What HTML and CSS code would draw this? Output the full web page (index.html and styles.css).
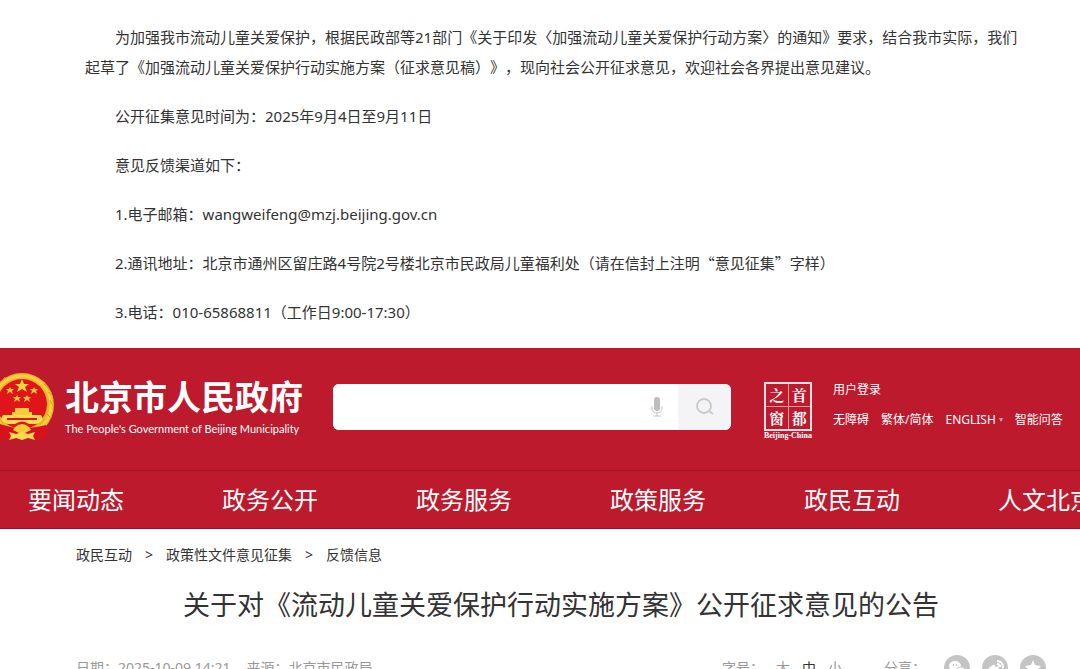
FILE: index.html
```
<!DOCTYPE html>
<html lang="zh-CN">
<head>
    <meta charset="UTF-8">
    <meta name="viewport" content="width=device-width, initial-scale=1.0">
    <title>北京市人民政府 - 反馈信息</title>
    <link rel="stylesheet" href="styles.css">
</head>
<body>
    <!-- 公告正文 -->
    <section class="notice">
        <p>为加强我市流动儿童关爱保护，根据民政部等21部门《关于印发〈加强流动儿童关爱保护行动方案〉的通知》要求，结合我市实际，我们起草了《加强流动儿童关爱保护行动实施方案（征求意见稿）》，现向社会公开征求意见，欢迎社会各界提出意见建议。</p>
        <p>公开征集意见时间为：2025年9月4日至9月11日</p>
        <p>意见反馈渠道如下：</p>
        <p>1.电子邮箱：wangweifeng@mzj.beijing.gov.cn</p>
        <p>2.通讯地址：北京市通州区留庄路4号院2号楼北京市民政局儿童福利处（请在信封上注明<span class="quote">“意见征集”</span>字样）</p>
        <p>3.电话：010-65868811（工作日9:00-17:30）</p>
    </section>

    <!-- 页头 -->
    <header class="header">
        <div class="top">
            <a class="logo" href="#">
                <svg class="emblem" viewBox="0 0 56 72" aria-hidden="true">
                    <circle cx="22" cy="33" r="32" fill="#e9b52c"/>
                    <circle cx="22" cy="33" r="29" fill="none" stroke="#f5cf3e" stroke-width="3"/>
                    <path d="M44 12l5 5M48 20l5 4M50 28l3 6M47 42l4 4M2 9l3-4" stroke="#d99a22"/>
                    <circle cx="22" cy="32" r="25" fill="#e0151b"/>
                    <path d="M0 52Q22 60 46 53L48 60Q46 68 34 68L22 66 10 68Q2 68 0 65z" fill="#d8121b"/>
                    <path d="M22 7l2 5h5l-4 3 2 5-5-3-5 3 2-5-4-3h5z" fill="#fbd93c"/>
                    <path d="M10 15l1 2h3l-2 2 1 3-3-2-3 2 1-3-2-2h3zM34 15l1 2h3l-2 2 1 3-3-2-3 2 1-3-2-2h3zM17 23l1 2h3l-2 2 1 3-3-2-3 2 1-3-2-2h3zM27 23l1 2h3l-2 2 1 3-3-2-3 2 1-3-2-2h3z" fill="#f6c933"/>
                    <path d="M15 36h14v4h3v5H12v-5h3z" fill="#f4cb3b"/>
                    <path d="M3 43h38l2 4q-3 5-8 5h-6q-7-5-14 0H9q-5 0-8-5z" fill="#f9da51"/>
                    <path d="M7 46h30v2H7z" fill="#e0151b"/>
                    <path d="M15 55q7-6 14 0l2 3-6 3h-6l-6-3z" fill="#f4cb3b"/>
                    <path d="M9 60l7 2 6-2 6 2 7-2-2 4 2 4-7-2-6 2-6-2-7 2 2-4z" fill="#f9da51"/>
                </svg>
                <span class="logo-text">
                    <strong>北京市人民政府</strong>
                    <span>The People's Government of Beijing Municipality</span>
                </span>
            </a>

            <form class="search">
                <input type="text" aria-label="搜索">
                <button type="button" class="voice" aria-label="语音">
                    <svg viewBox="0 0 12 20" width="12" height="20">
                        <rect x="3" y="0" width="6" height="14" rx="3" fill="#bdbdbd"/>
                        <path d="M1 9v3a5 4 0 0 0 10 0V9M6 16v3M2 19h8" fill="none" stroke="#c4c4c4"/>
                    </svg>
                </button>
                <button type="submit" class="submit" aria-label="搜索">
                    <svg viewBox="0 0 18 18" width="18" height="18">
                        <circle cx="8" cy="8" r="7" fill="none" stroke="#c9c9c9" stroke-width="1.8"/>
                        <path d="M13 13l4 3" stroke="#c9c9c9" stroke-width="1.8"/>
                    </svg>
                </button>
            </form>

            <a class="capital" href="#">
                <span class="seal">
                    <span>之</span><span>首</span><span>窗</span><span>都</span>
                </span>
                <span class="seal-name">Beijing-China</span>
            </a>

            <div class="links">
                <div><a href="#">用户登录</a></div>
                <div class="links-row">
                    <a href="#">无障碍</a>
                    <a href="#">繁体/简体</a>
                    <a href="#" class="english">ENGLISH<i></i></a>
                    <a href="#">智能问答</a>
                </div>
            </div>
        </div>
        <nav class="nav">
            <a href="#">要闻动态</a>
            <a href="#">政务公开</a>
            <a href="#">政务服务</a>
            <a href="#">政策服务</a>
            <a href="#">政民互动</a>
            <a href="#">人文北京</a>
        </nav>
    </header>

    <!-- 反馈信息 -->
    <main class="main">
        <div class="crumbs">
            <a href="#">政民互动</a>
            <span>&gt;</span>
            <a href="#">政策性文件意见征集</a>
            <span>&gt;</span>
            <a href="#">反馈信息</a>
        </div>
        <h1>关于对《流动儿童关爱保护行动实施方案》公开征求意见的公告</h1>
        <div class="meta">
            <span>日期：2025-10-09 14:21</span>
            <span>来源：北京市民政局</span>
            <div class="size">
                <span>字号：</span>
                <button type="button">大</button>
                <button type="button" class="on">中</button>
                <button type="button">小</button>
            </div>
            <div class="share">
                <span>分享：</span>
                <a href="#" aria-label="微信">
                    <svg viewBox="0 0 26 26"><circle cx="13" cy="13" r="13" fill="#c4c4c4"/><ellipse cx="11" cy="11" rx="6" ry="5" fill="#fff"/><ellipse cx="17" cy="16" rx="5" ry="4" fill="#fff" stroke="#c4c4c4"/><path d="M9 10h1M12 10h1" stroke="#c4c4c4" stroke-width="2"/></svg>
                </a>
                <a href="#" aria-label="微博">
                    <svg viewBox="0 0 26 26"><circle cx="13" cy="13" r="13" fill="#c4c4c4"/><path d="M6 16q0-4 5-6 3-1 2 2 5-2 4 2 3 1 1 3-5 5-11 1-1-1-1-2z" fill="#fff"/><path d="M15 6q6 0 6 7M15 9q3 0 3 3" fill="none" stroke="#fff" stroke-width="2"/></svg>
                </a>
                <a href="#" aria-label="收藏">
                    <svg viewBox="0 0 26 26"><circle cx="13" cy="13" r="13" fill="#c4c4c4"/><path d="M13 5l2 5 6 1-4 4 1 6-5-3-5 3 1-6-4-4 6-1z" fill="#fff"/></svg>
                </a>
            </div>
        </div>
    </main>
</body>
</html>
```
FILE: styles.css
```
* {
    box-sizing: border-box;
}

body {
    margin: 0;
    height: 100vh;
    overflow: hidden;
    background-color: white;
    color: #333333;
    font-family: "Noto Sans", "Noto Sans CJK SC", sans-serif;
    font-size: 15px;
    text-spacing-trim: space-all;
}

a {
    color: inherit;
    text-decoration: none;
}

button {
    padding: 0;
    border: none;
    background: none;
    color: inherit;
    font: inherit;
    cursor: pointer;
}

svg {
    display: block;
}

.notice {
    padding: 22px 50px 21px 85px;
}

.notice p {
    margin: 0 0 19px;
    line-height: 30px;
    text-indent: 2em;
}

.notice p:last-child {
    margin-bottom: 0;
}

.quote {
    font-family: "Noto Sans CJK SC", sans-serif;
}

/* 页头 */
.header {
    background-color: #bd1a2d;
    color: white;
}

.top {
    display: flex;
    align-items: flex-start;
    height: 122px;
    padding-top: 24px;
}

.logo {
    display: flex;
    gap: 9px;
    flex: none;
    width: 333px;
}

.emblem {
    width: 56px;
    height: 72px;
}

.logo-text strong {
    display: block;
    padding-top: 4px;
    font-size: 34px;
    line-height: 42px;
}

.logo-text span {
    display: block;
    font-family: Lato, sans-serif;
    font-size: 11px;
    line-height: 22px;
    white-space: nowrap;
}

.search {
    display: flex;
    flex: 1;
    max-width: 398px;
    height: 46px;
    margin-top: 12px;
    border-radius: 6px;
    overflow: hidden;
    background-color: white;
}

.search input {
    flex: 1;
    min-width: 0;
    padding: 0 12px;
    border: none;
    outline: none;
    font-size: 15px;
}

.search button {
    display: flex;
    align-items: center;
    justify-content: center;
}

.search .voice {
    width: 42px;
}

.search .submit {
    width: 53px;
    background-color: #f4f4f6;
}

.capital {
    flex: none;
    width: 54px;
    margin: 10px 18px 0 30px;
    text-align: center;
}

.seal {
    display: grid;
    grid-template-columns: 1fr 1fr;
    gap: 1px;
    width: 48px;
    margin: 0 auto;
    border: 2px solid #fbe3e3;
    background-color: #e59aa0;
}

.seal span {
    background-color: #bd1a2d;
    font-family: "Noto Serif CJK SC", "Noto Sans CJK SC", serif;
    font-size: 15px;
    font-weight: bold;
    line-height: 22px;
}

.seal-name {
    display: block;
    font-family: "Liberation Serif", serif;
    font-size: 8px;
    font-weight: bold;
    line-height: 10px;
}

.links {
    padding-top: 9px;
    font-size: 12px;
    line-height: 18px;
    white-space: nowrap;
}

.links-row {
    display: flex;
    gap: 12px;
    margin-top: 12px;
}

.english {
    display: flex;
    align-items: center;
    gap: 3px;
}

.english i {
    border: 2px solid transparent;
    border-top: 4px solid #f0a0a0;
    border-bottom: none;
}

.nav {
    display: flex;
    height: 59px;
    padding-left: 28px;
    overflow: hidden;
    border-top: 1px solid #9c1424;
    border-bottom: 1px solid #9c1424;
}

.nav a {
    flex: none;
    width: 194px;
    font-size: 24px;
    line-height: 57px;
}

/* 标题 */
.main {
    padding: 16px 34px 0 76px;
}

.crumbs {
    display: flex;
    gap: 13px;
    font-size: 14px;
    line-height: 20px;
}

h1 {
    margin: 20px 0 0;
    font-size: 27px;
    font-weight: normal;
    line-height: 40px;
    text-align: center;
}

.meta {
    display: flex;
    align-items: center;
    gap: 16px;
    margin-top: 30px;
    color: #999999;
    font-size: 14px;
    line-height: 26px;
}

.size {
    display: flex;
    gap: 12px;
    margin-left: auto;
}

.size .on {
    color: #333333;
}

.share {
    display: flex;
    gap: 12px;
    margin-left: 26px;
}

.share span {
    margin-right: 6px;
}

.share svg {
    width: 26px;
    height: 26px;
}
```
